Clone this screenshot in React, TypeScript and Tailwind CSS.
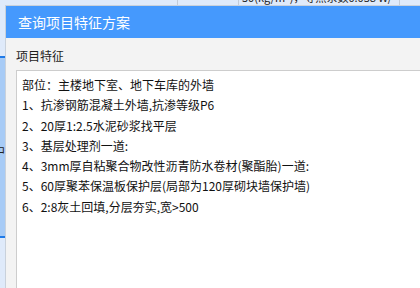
const lines = [
  "部位：主楼地下室、地下车库的外墙",
  "1、抗渗钢筋混凝土外墙,抗渗等级P6",
  "2、20厚1:2.5水泥砂浆找平层",
  "3、基层处理剂一道:",
  "4、3mm厚自粘聚合物改性沥青防水卷材(聚酯胎)一道:",
  "5、60厚聚苯保温板保护层(局部为120厚砌块墙保护墙)",
  "6、2:8灰土回填,分层夯实,宽>500",
];

function Backdrop() {
  return (
    <div className="flex h-full w-full bg-[#dfeafa]">
      <div className="flex w-[5px] flex-col">
        <div className="h-[56px] shrink-0" />
        <div className="h-[2px] shrink-0 bg-[#1f7ae8]" />
        <div className="h-[178px] shrink-0 bg-[#a7cbf6] pt-[86px]">
          <div className="-ml-[7px] text-[12px] leading-[14px] text-[#222]">中</div>
        </div>
        <div className="h-[2px] shrink-0 bg-[#1f7ae8]" />
        <div className="flex-1" />
      </div>
      <div className="flex flex-1 flex-col">
        <div className="flex h-[6px] border-b border-[#c3ccd8]">
          <div className="w-[173px] border-r border-[#c3ccd8]" />
          <div className="w-[61px] border-r border-[#c3ccd8]" />
          <div className="w-[161px] overflow-hidden border-r border-[#c3ccd8] pl-[3px]">
            <div className="-mt-[9px] whitespace-nowrap text-[11px] leading-[12px] text-[#222]">
              50(kg/m³)，导热系数0.038 W/
            </div>
          </div>
          <div className="flex-1" />
        </div>
      </div>
    </div>
  );
}

export default function App() {
  return (
    <div className="relative h-[288px] w-[420px] overflow-hidden font-['Microsoft_YaHei','Noto_Sans_CJK_SC',sans-serif]">
      <Backdrop />
      <div className="absolute left-[5px] top-[5px] flex h-[400px] w-[500px] flex-col border border-[#c9d1db] bg-[#f3f3f3]">
        <div className="flex h-[32px] shrink-0 items-center bg-[#4599fd] pl-[12px] text-[14px] text-white">
          查询项目特征方案
        </div>
        <div className="mt-[8px] pl-[10px] text-[12px] leading-[20px] text-[#1e1e1e]">项目特征</div>
        <div className="ml-[10px] mt-[4px] flex-1 border border-[#cdcdcd] bg-white pl-[5px] pt-[4px] text-[12px] leading-[20.3px] text-[#111]">
          {lines.map((l) => (
            <div key={l} className="whitespace-nowrap">
              {l}
            </div>
          ))}
        </div>
      </div>
    </div>
  );
}
